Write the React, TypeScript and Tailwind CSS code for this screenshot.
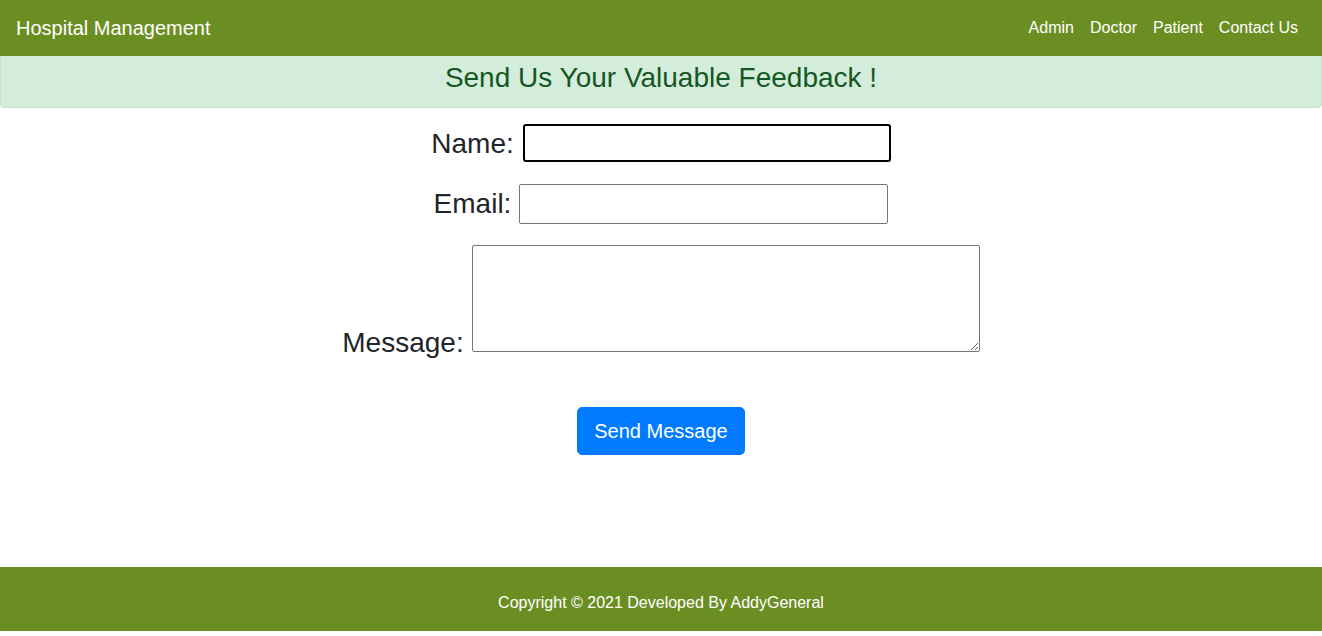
import React from 'react';

const App: React.FC = () => {
  return (
    <div className="min-h-[636px] bg-white font-['Liberation_Sans',Arial,sans-serif] text-[#212529]">
      {/* Navbar */}
      <nav className="h-14 bg-[#6b8e23] flex items-center justify-between px-4">
        <a href="#" className="text-[20px] leading-[30px] text-white">
          Hospital Management
        </a>
        <ul className="flex items-center">
          {['Admin', 'Doctor', 'Patient', 'Contact Us'].map((item) => (
            <li key={item}>
              <a href="#" className="block px-2 py-2 text-base leading-6 text-white">
                {item}
              </a>
            </li>
          ))}
        </ul>
      </nav>

      {/* Alert */}
      <div className="bg-[#d4edda] border-x border-b border-[#c3e6cb] rounded-b-[4px] pt-[5px] pb-[12px] text-center">
        <h3 className="text-[28px] leading-[1.2] text-[#155724]">Send Us Your Valuable Feedback !</h3>
      </div>

      {/* Form */}
      <form className="flex flex-col items-center pt-[16px]">
        <div className="flex items-center justify-center gap-[9px]">
          <label className="text-[28px] leading-[1.2] translate-y-[1px]">Name:</label>
          <input
            type="text"
            className="w-[368px] h-[38px] border-2 border-black rounded-[3px] outline-none px-1"
          />
        </div>
        <div className="flex items-center justify-center gap-[8px] mt-[22px]">
          <label className="text-[28px] leading-[1.2]">Email:</label>
          <input
            type="email"
            className="w-[369px] h-[40px] border border-[#767676] rounded-[2px] outline-none px-1"
          />
        </div>
        <div className="flex items-end justify-center gap-[8px] mt-[21px]">
          <label className="text-[28px] leading-none translate-y-[5px]">Message:</label>
          <textarea className="w-[508px] h-[107px] border border-[#767676] rounded-[2px] outline-none p-1 block" />
        </div>
        <button
          type="button"
          className="mt-[55px] bg-[#007bff] text-white text-[20px] leading-[1.5] px-4 py-2 rounded-[5px] border border-[#007bff]"
        >
          Send Message
        </button>
      </form>

      {/* Footer */}
      <footer className="mt-[112px] bg-[#6b8e23] text-center text-white pt-[24px] pb-[16px]">
        <p className="text-base leading-6">Copyright © 2021 Developed By AddyGeneral</p>
      </footer>
    </div>
  );
};

export default App;
